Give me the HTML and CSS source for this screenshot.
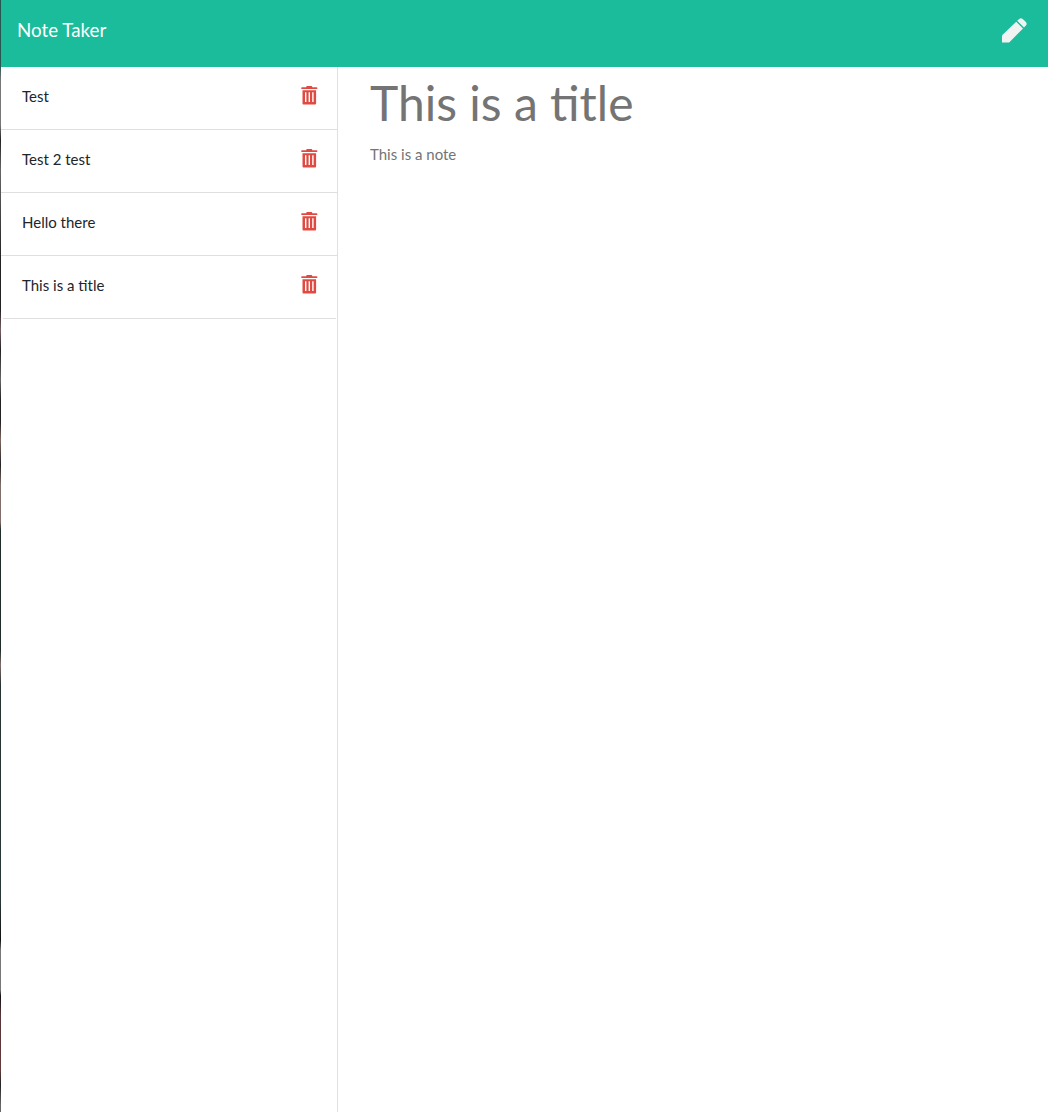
FILE: index.html
```
<!DOCTYPE html>
<html lang="en">
<head>
<meta charset="utf-8">
<title>Note Taker</title>
<link rel="stylesheet" href="styles.css">
</head>
<body>
<svg class="symbols" width="0" height="0" aria-hidden="true">
  <symbol id="trash" viewBox="0 0 17 19"><path fill-rule="evenodd" d="M5.300 1.200V.7Q5.300 0 6 0H10.500Q11.200 0 11.200.7V1.200H15.700Q16.300 1.200 16.300 1.800V3.100H.3V1.800Q.3 1.200.9 1.200zM1.500 4.200H15.100V17.600Q15.100 18.500 14.200 18.500H2.400Q1.500 18.500 1.500 17.600zM4 6.200V16H5.400V6.200zM7.600 6.200V16H9V6.200zM11.200 6.200V16H12.600V6.200z"/></symbol>
</svg>
<header class="navbar">
  <a class="brand">Note Taker</a>
  <svg class="pen" viewBox="0 0 25 25"><path d="M0 24.600V18.200Q0 17.300.6 16.700L14.200 3.800 21 10.600 7.700 23.900Q7.100 24.600 6.200 24.600zM15.200 2.800L17.200.9Q18.900-.6 20.700.9L23.900 4.100Q25.400 5.900 23.900 7.600L22 9.600z"/></svg>
</header>
<main class="layout">
  <ul class="list">
    <li class="item"><span>Test</span><svg class="trash"><use href="#trash"/></svg></li>
    <li class="item"><span>Test 2 test</span><svg class="trash"><use href="#trash"/></svg></li>
    <li class="item"><span>Hello there</span><svg class="trash"><use href="#trash"/></svg></li>
    <li class="item"><span>This is a title</span><svg class="trash"><use href="#trash"/></svg></li>
  </ul>
  <section class="note">
    <h1 class="title">This is a title</h1>
    <p class="text">This is a note</p>
  </section>
</main>
</body>
</html>
```
FILE: styles.css
```
* { box-sizing: border-box; }
body {
  margin: 0;
  min-height: 100vh;
  display: flex;
  flex-direction: column;
  border-left: 1px solid;
  border-image: linear-gradient(#285650 0, #285650 66px, #777 80px, #777 125px, #222 140px, #666 170px, #222 260px, #222 310px, #765f65 330px, #222 350px, #666 380px, #222 400px, #222 422px, #806860 440px, #222 465px, #806c68 485px, #806c68 522px, #202c2a 530px, #202c2a 650px, #806c68 665px, #263330 685px, #283838 900px, #111 940px, #777 950px, #777 990px, #111 996px, #553538 1015px, #603b3c 1070px, #222 1085px, #666 1105px) 0 0 0 1;
  font: 15px/22.5px Lato, sans-serif;
  color: #212529;
  background: #fff;
}
.symbols { position: absolute; }
.navbar {
  height: 67px;
  padding: 15px 21px 0 16px;
  display: flex;
  justify-content: space-between;
  align-items: flex-start;
  background: #1abc9c;
  color: #fff;
}
.brand { font-size: 18.750px; line-height: 30px; }
.pen { width: 25px; height: 25px; margin-top: 3px; fill: #f0f3f2; }
.layout { flex: 1; display: flex; }
.list {
  width: 337px;
  margin: 0;
  padding: 0;
  list-style: none;
  border-right: 1px solid #dee2e6;
}
.item {
  height: 63px;
  padding: 18px 19px 0 21px;
  display: flex;
  justify-content: space-between;
  border-bottom: 1px solid #dfdfdf;
}
.item:last-child { margin: 0 1px 0 2px; padding: 18px 18px 0 19px; }
.trash { width: 17px; height: 19px; margin-top: 1px; fill: #df4b43; }
.note { padding: 0 32px; color: #747474; }
.title { margin: 0; font-size: 48px; line-height: 72px; font-weight: 400; }
.text { margin: 4px 0 0; }
```
